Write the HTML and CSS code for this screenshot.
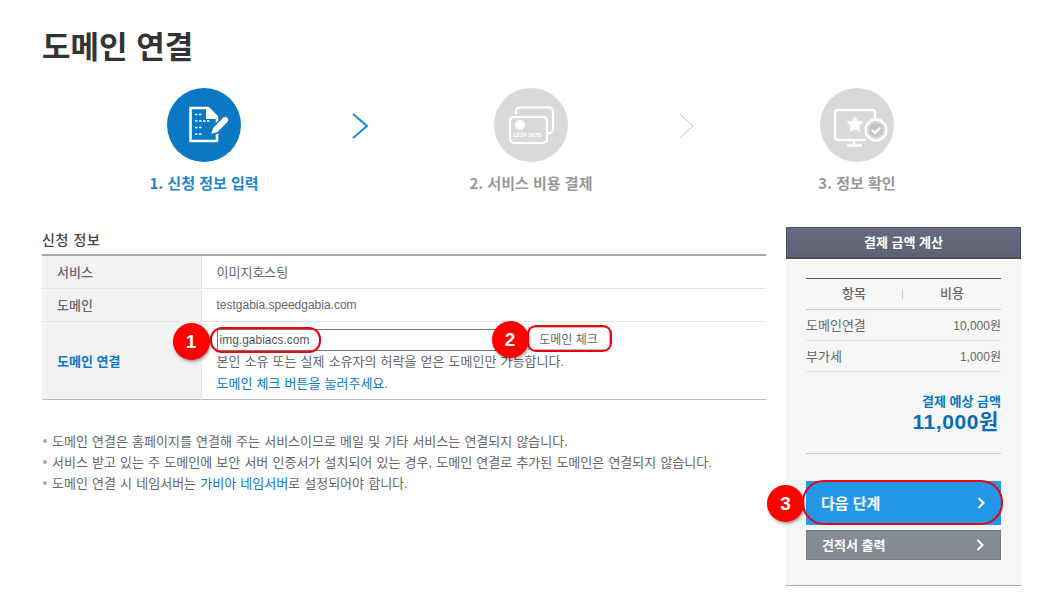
FILE: index.html
```html
<!DOCTYPE html>
<html lang="ko">
<head>
  <meta charset="UTF-8">
  <title>도메인 연결</title>
  <link rel="stylesheet" href="styles.css">
</head>
<body>
  <h1 class="page-title">도메인 연결</h1>

  <div class="steps">
    <div class="step on">
      <div class="step-icon">
        <svg width="74" height="74" viewBox="0 0 74 74">
          <path d="M23.5 20 H41 L50 29 V53 H23.5 Z" fill="none" stroke="#fff" stroke-width="2.6" stroke-linejoin="round"/>
          <path d="M39 20 H42 L50 28 V31 H39 Z" fill="#fff"/>
          <path d="M28 26.500 h2.500 m1.500 0 h2.500 M28 33 h2.500 m1.500 0 h2.500 m1.500 0 h2.500 m1.500 0 h2.500 M28 39.500 h2.500 m1.500 0 h2.500 M28 46 h2.500 m1.500 0 h2.500" stroke="#fff" stroke-width="1.500" fill="none"/>
          <path d="M43 47 L45.500 39.500 L56 29 Q58.500 27 60.500 29 L61.500 30 Q63 32 61 34.500 L50.500 45 Z" fill="#fff" stroke="#0a78c5" stroke-width="1.500"/>
        </svg>
      </div>
      <div class="step-name">1. 신청 정보 입력</div>
    </div>
    <svg class="step-arrow" width="16" height="26" viewBox="0 0 16 26"><path d="M1 1 L15 13 L1 25" fill="none" stroke="#2088d8" stroke-width="2"/></svg>
    <div class="step">
      <div class="step-icon">
        <svg width="74" height="74" viewBox="0 0 74 74">
          <path d="M22 26 V23 Q22 19.500 26 19.500 H55 Q59 19.500 59 23 V41 Q59 45 55 45 H53" fill="none" stroke="#fff" stroke-width="2.200"/>
          <rect x="16" y="29" width="37" height="26" rx="4" fill="none" stroke="#fff" stroke-width="2.200"/>
          <circle cx="26" cy="37" r="5" fill="#fff"/>
          <text x="19" y="49" class="card-no">1234 5678</text>
        </svg>
      </div>
      <div class="step-name">2. 서비스 비용 결제</div>
    </div>
    <svg class="step-arrow" width="15" height="26" viewBox="0 0 15 26"><path d="M1 1 L14 13 L1 25" fill="none" stroke="#c4c4c4" stroke-width="1"/></svg>
    <div class="step">
      <div class="step-icon">
        <svg width="74" height="74" viewBox="0 0 74 74">
          <path d="M46 52 H18 Q15 52 15 49 V25 Q15 22 18 22 H52 Q55 22 55 25 V31" fill="none" stroke="#fff" stroke-width="2.400"/>
          <path d="M34 52 V57 M27 57.500 H42" stroke="#fff" stroke-width="2.400" fill="none"/>
          <path d="M35 27.500 L37.700 33 L43.500 33.800 L39.300 38 L40.300 44 L35 41.200 L29.700 44 L30.700 38 L26.500 33.800 L32.300 33 Z" fill="#fff"/>
          <circle cx="56" cy="42" r="10.500" fill="#d9d9d9" stroke="#fff" stroke-width="2.400"/>
          <circle cx="56" cy="42" r="7" fill="#c4c4c4"/>
          <path d="M52 42 L55 45 L60.500 39.500" fill="none" stroke="#fff" stroke-width="2"/>
        </svg>
      </div>
      <div class="step-name">3. 정보 확인</div>
    </div>
  </div>

  <div class="content">
    <div class="main">
      <h2 class="section-title">신청 정보</h2>
      <table class="info-table">
        <tr>
          <th>서비스</th>
          <td>이미지호스팅</td>
        </tr>
        <tr>
          <th>도메인</th>
          <td class="latin">testgabia.speedgabia.com</td>
        </tr>
        <tr class="last-row">
          <th class="blue">도메인 연결</th>
          <td>
            <div class="domain-row">
              <div class="domain-input">
                <input type="text" value="img.gabiacs.com">
                <span class="ring"></span>
                <span class="mark">1</span>
              </div>
              <div class="check-wrap">
                <button class="check-btn">도메인 체크</button>
                <span class="ring"></span>
                <span class="mark">2</span>
              </div>
            </div>
            <p class="help">본인 소유 또는 실제 소유자의 허락을 얻은 도메인만 가능합니다.</p>
            <p class="help blue">도메인 체크 버튼을 눌러주세요.</p>
          </td>
        </tr>
      </table>

      <ul class="notes">
        <li>도메인 연결은 홈페이지를 연결해 주는 서비스이므로 메일 및 기타 서비스는 연결되지 않습니다.</li>
        <li>서비스 받고 있는 주 도메인에 보안 서버 인증서가 설치되어 있는 경우, 도메인 연결로 추가된 도메인은 연결되지 않습니다.</li>
        <li>도메인 연결 시 네임서버는 <a href="#">가비아 네임서버</a>로 설정되어야 합니다.</li>
      </ul>
    </div>

    <aside class="side">
      <div class="side-head">결제 금액 계산</div>
      <div class="side-body">
        <div class="price-head">
          <span>항목</span>
          <span>비용</span>
        </div>
        <div class="price-row"><span>도메인연결</span><span class="amount">10,000원</span></div>
        <div class="price-row"><span>부가세</span><span class="amount">1,000원</span></div>
        <div class="total">
          <div class="total-label">결제 예상 금액</div>
          <div class="total-num">11,000원</div>
        </div>
        <a class="side-btn next" href="#">
          다음 단계
          <svg width="9" height="14" viewBox="0 0 9 14"><path d="M1.500 2 L6.500 7 L1.500 12" fill="none" stroke="#fff" stroke-width="2"/></svg>
          <span class="ring"></span>
          <span class="mark">3</span>
        </a>
        <a class="side-btn print" href="#">
          견적서 출력
          <svg width="9" height="14" viewBox="0 0 9 14"><path d="M1.500 2 L6.500 7 L1.500 12" fill="none" stroke="#fff" stroke-width="2"/></svg>
        </a>
      </div>
    </aside>
  </div>
</body>
</html>
```

FILE: styles.css
```css
* {
  box-sizing: border-box;
}

body {
  margin: 0;
  padding: 0 23px 0 42px;
  background-color: #fff;
  color: #555;
  font-family: "Liberation Sans", "Noto Sans CJK KR", sans-serif;
  font-size: 13px;
}

.page-title {
  margin: 0;
  padding-top: 22px;
  height: 88px;
  font-family: "Noto Sans CJK KR", sans-serif;
  font-size: 31px;
  line-height: 46px;
  font-weight: 700;
  color: #333;
}

.blue {
  color: #0a78c5;
}

/* steps */
.steps {
  display: flex;
  align-items: flex-start;
  padding-left: 85px;
  height: 139px;
}

.step {
  width: 154px;
  flex-shrink: 0;
  display: flex;
  flex-direction: column;
  align-items: center;
}

.step-icon {
  width: 74px;
  height: 74px;
  border-radius: 50%;
  background-color: #d9d9d9;
}

.step-icon svg {
  display: block;
}

.step.on .step-icon {
  background-color: #0a78c5;
}

.step-name {
  margin-top: 9px;
  font-family: "Noto Sans CJK KR", sans-serif;
  font-size: 15px;
  line-height: 24px;
  font-weight: 700;
  color: #999;
  white-space: nowrap;
}

.step.on .step-name {
  color: #1c84cf;
}

.step-arrow {
  margin-top: 25px;
  margin-left: 71px;
  margin-right: 86px;
  flex-shrink: 0;
}

.card-no {
  font-size: 6px;
  font-weight: 700;
  font-family: "Liberation Sans", sans-serif;
  fill: #fff;
}

/* main */
.content {
  display: flex;
  gap: 20px;
}

.main {
  width: 724px;
}

.section-title {
  margin: 0;
  padding-top: 2px;
  height: 27px;
  font-family: "Noto Sans CJK KR", sans-serif;
  font-size: 14px;
  line-height: 20px;
  font-weight: 500;
  letter-spacing: 0.6px;
  color: #444;
}

.info-table {
  width: 100%;
  border-collapse: collapse;
  border-top: 2px solid #aaa;
  border-bottom: 1px solid #bbb;
}

.info-table tr {
  height: 33px;
  border-bottom: 1px solid #e4e4e4;
}

.info-table tr.last-row {
  height: 78px;
  border-bottom: 0;
}

.info-table th {
  width: 159px;
  padding: 0 0 0 15px;
  background-color: #f2f2f2;
  border-right: 1px solid #e4e4e4;
  text-align: left;
  font-weight: 500;
  color: #666;
}

.info-table th.blue {
  color: #0a78c5;
  font-weight: 700;
}

.info-table td {
  padding: 0 0 0 15px;
  color: #666;
}

.info-table td.latin {
  font-size: 12px;
}

.last-row td {
  padding-top: 5px;
  padding-bottom: 4px;
  vertical-align: top;
}

.domain-row {
  display: flex;
  align-items: flex-start;
  gap: 23px;
  height: 24px;
}

.domain-input,
.check-wrap {
  position: relative;
}

.domain-input {
  margin-top: 2px;
  height: 22px;
}

.domain-input input {
  display: block;
  width: 288px;
  height: 22px;
  padding: 0 2px;
  border: 1px solid #777;
  background: #fff;
  font-family: inherit;
  font-size: 12px;
  color: #555;
  outline: 0;
}

.check-btn {
  display: block;
  width: 82px;
  height: 23px;
  padding: 0;
  border: 1px solid #bbb;
  background: #fff;
  font-family: inherit;
  font-size: 12px;
  color: #666;
}

.help {
  margin: 0;
  line-height: 22px;
  word-spacing: 0.5px;
}

.help.blue {
  color: #0a78c5;
}

/* numbered callouts */
.ring {
  position: absolute;
  border: 2px solid #ee0011;
  border-radius: 12px;
}

.mark {
  position: absolute;
  width: 37px;
  height: 37px;
  border-radius: 50%;
  background-color: #f00;
  box-shadow: 1px 2px 3px rgba(0, 0, 0, 0.35);
  color: #fff;
  font-family: "Liberation Sans", sans-serif;
  font-size: 19px;
  font-weight: 700;
  line-height: 37px;
  text-align: center;
}

.domain-input .ring {
  left: -7px;
  top: -2px;
  width: 111px;
  height: 26px;
}

.domain-input .mark {
  left: -44px;
  top: -6px;
}

.check-wrap .ring {
  left: -1px;
  top: -2px;
  width: 85px;
  height: 27px;
  border-radius: 9px;
}

.check-wrap .mark {
  left: -36px;
  top: -6px;
}

.notes {
  margin: 31px 0 0;
  padding: 0;
  list-style: none;
  color: #666;
  word-spacing: 0.55px;
}

.notes li {
  position: relative;
  padding-left: 10px;
  line-height: 21px;
}

.notes li::before {
  content: "";
  position: absolute;
  left: 1px;
  top: 8px;
  width: 4px;
  height: 4px;
  border-radius: 50%;
  background-color: #aaa;
}

.notes a {
  color: #0a78c5;
  text-decoration: none;
}

/* sidebar */
.side {
  width: 235px;
}

.side-head {
  height: 32px;
  background: linear-gradient(#666c7e, #5c6274);
  border: 1px solid #4a4e5c;
  border-bottom-width: 2px;
  color: #fff;
  font-size: 13px;
  font-weight: 700;
  line-height: 29px;
  text-align: center;
}

.side-body {
  height: 327px;
  padding: 19px 20px 0;
  background-color: #f6f6f6;
  border-bottom: 1px solid #aaa;
}

.price-head {
  display: flex;
  align-items: center;
  height: 32px;
  border-top: 1px solid #555;
  border-bottom: 1px solid #ccc;
  font-weight: 500;
  color: #666;
}

.price-head span {
  flex: 1;
  text-align: center;
  line-height: 10px;
}

.price-head span:first-child {
  flex: 0 0 97px;
  border-right: 1px solid #ccc;
}

.price-row {
  display: flex;
  justify-content: space-between;
  align-items: center;
  height: 31px;
  padding-bottom: 2px;
  border-bottom: 1px solid #e0e0e0;
  color: #666;
}

.amount {
  font-size: 12px;
}

.total {
  height: 82px;
  padding-top: 22px;
  border-bottom: 1px solid #ccc;
  text-align: right;
}

.total-label {
  font-weight: 700;
  line-height: 16px;
  color: #0a78c5;
}

.total-num {
  margin-right: 2px;
  font-size: 21px;
  font-weight: 700;
  line-height: 24px;
  letter-spacing: 0.6px;
  color: #0a6cb4;
}

.side-btn {
  position: relative;
  display: flex;
  justify-content: space-between;
  align-items: center;
  padding: 0 15px 2px;
  color: #fff;
  font-weight: 700;
  text-decoration: none;
}

.side-btn svg {
  margin-top: 2px;
}

.side-btn.next {
  margin-top: 27px;
  height: 44px;
  background-color: #2496e6;
  font-size: 15px;
}

.side-btn.print {
  margin-top: 5px;
  height: 30px;
  background-color: #838b93;
  border: 1px solid #747c84;
  font-size: 13px;
}

.next .ring {
  left: -4px;
  top: -1px;
  width: 201px;
  height: 45px;
  border-radius: 22px;
}

.next .mark {
  left: -39px;
  top: 4px;
}
```
